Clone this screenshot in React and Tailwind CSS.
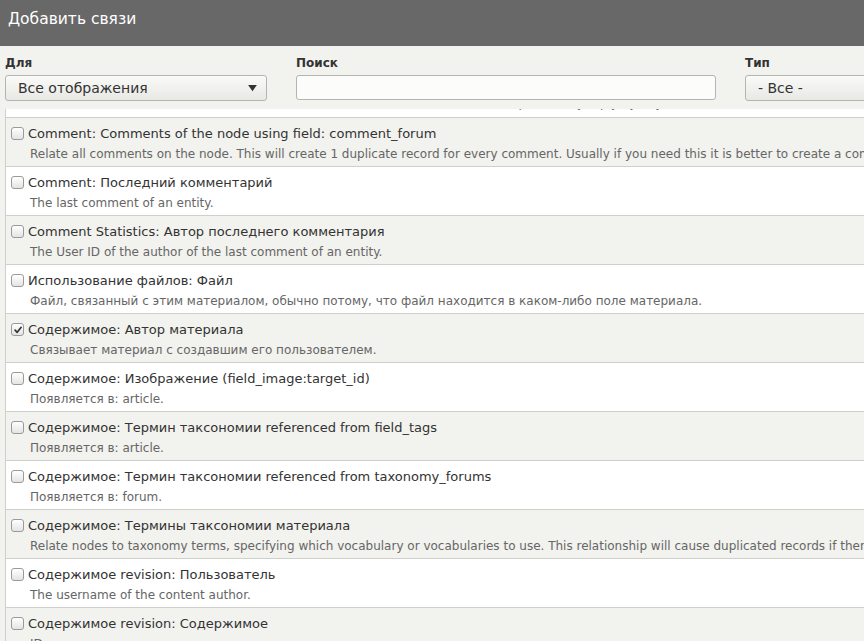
import { useState } from "react";

const rows = [
  {
    title: "Comment: Comments of the node using field: comment_forum",
    desc: "Relate all comments on the node. This will create 1 duplicate record for every comment. Usually if you need this it is better to create a comment view.",
  },
  { title: "Comment: Последний комментарий", desc: "The last comment of an entity." },
  {
    title: "Comment Statistics: Автор последнего комментария",
    desc: "The User ID of the author of the last comment of an entity.",
  },
  {
    title: "Использование файлов: Файл",
    desc: "Файл, связанный с этим материалом, обычно потому, что файл находится в каком-либо поле материала.",
  },
  {
    title: "Содержимое: Автор материала",
    desc: "Связывает материал с создавшим его пользователем.",
    checked: true,
  },
  { title: "Содержимое: Изображение (field_image:target_id)", desc: "Появляется в: article." },
  { title: "Содержимое: Термин таксономии referenced from field_tags", desc: "Появляется в: article." },
  { title: "Содержимое: Термин таксономии referenced from taxonomy_forums", desc: "Появляется в: forum." },
  {
    title: "Содержимое: Термины таксономии материала",
    desc: "Relate nodes to taxonomy terms, specifying which vocabulary or vocabularies to use. This relationship will cause duplicated records if there are multiple terms.",
  },
  { title: "Содержимое revision: Пользователь", desc: "The username of the content author." },
  { title: "Содержимое revision: Содержимое", desc: "ID" },
];

const Checkbox = ({ checked, onChange }) => (
  <button
    onClick={onChange}
    className="mt-[2px] w-[13px] h-[13px] shrink-0 rounded-[3px] border border-[#9a9a9a] bg-gradient-to-b from-white to-[#e4e4e4] flex items-center justify-center"
  >
    {checked && (
      <svg viewBox="0 0 12 12" className="w-[10px] h-[10px]">
        <path d="M2.5 6.2 L5 8.8 L9.8 2.8" fill="none" stroke="#333" strokeWidth="2" strokeLinecap="round" strokeLinejoin="round" />
      </svg>
    )}
  </button>
);

export default function App() {
  const [checked, setChecked] = useState(rows.map((r) => !!r.checked));

  const toggle = (i) =>
    setChecked((c) => c.map((v, j) => (j === i ? !v : v)));

  return (
    <div
      className="w-[864px] h-[641px] overflow-hidden bg-[#f2f2ee] flex flex-col"
      style={{ fontFamily: '"DejaVu Sans", sans-serif' }}
    >
      <div className="h-[46px] shrink-0 bg-[#686868] flex items-center px-2">
        <h1 className="text-white text-[15.5px] pb-[7px]">Добавить связи</h1>
      </div>

      <div className="shrink-0 flex px-[5px] pt-[10px] gap-[29px] h-[63px]">
        <div className="w-[262px] shrink-0">
          <div className="text-[12px] font-bold text-[#333] leading-[14px] mb-[5px]">Для</div>
          <div className="h-[26px] rounded-[3px] border border-[#b4b4b0] bg-gradient-to-b from-[#fafaf8] to-[#e8e8e4] flex items-center justify-between pl-[12px] pr-[9px]">
            <span className="text-[14px] text-[#333]">Все отображения</span>
            <svg viewBox="0 0 10 8" className="w-[9px] h-[7px]">
              <path d="M0 0 L10 0 L5 7 Z" fill="#333" />
            </svg>
          </div>
        </div>
        <div className="w-[420px] shrink-0">
          <div className="text-[12px] font-bold text-[#333] leading-[14px] mb-[5px]">Поиск</div>
          <input className="w-full h-[25px] rounded-[3px] border border-[#b4b4b0] bg-[#fcfcfa] outline-none" />
        </div>
        <div className="w-[160px] shrink-0">
          <div className="text-[12px] font-bold text-[#333] leading-[14px] mb-[5px]">Тип</div>
          <div className="h-[26px] rounded-[3px] border border-[#b4b4b0] bg-gradient-to-b from-[#fafaf8] to-[#e8e8e4] flex items-center pl-[12px]">
            <span className="text-[14px] text-[#333]">- Все -</span>
          </div>
        </div>
      </div>

      <div className="ml-[5px] flex-1 bg-white border-l border-[#cfcfcb] overflow-hidden">
        {/* bottom of the row scrolled out above */}
        <div className="h-[9px] overflow-hidden border-b border-[#cfcfcb]">
          <div className="-mt-[14px] pl-[24px] text-[12px] text-[#666] leading-[16px] whitespace-nowrap">
            Relate comments to the user who created them. The comment author relationship for every reply by any user.
          </div>
        </div>
        {rows.map((r, i) => (
          <div
            key={r.title}
            className={`h-[49px] border-b border-[#cfcfcb] pl-[5px] pt-[7px] ${
              i % 2 === 0 ? "bg-[#f2f2ee]" : "bg-white"
            }`}
          >
            <label className="flex items-start gap-[4px]">
              <Checkbox checked={checked[i]} onChange={() => toggle(i)} />
              <span className="text-[13px] text-[#333] leading-[18px] whitespace-nowrap">{r.title}</span>
            </label>
            <div className="pl-[19px] mt-[3px] text-[12px] text-[#666] leading-[16px] whitespace-nowrap">
              {r.desc}
            </div>
          </div>
        ))}
      </div>
    </div>
  );
}
